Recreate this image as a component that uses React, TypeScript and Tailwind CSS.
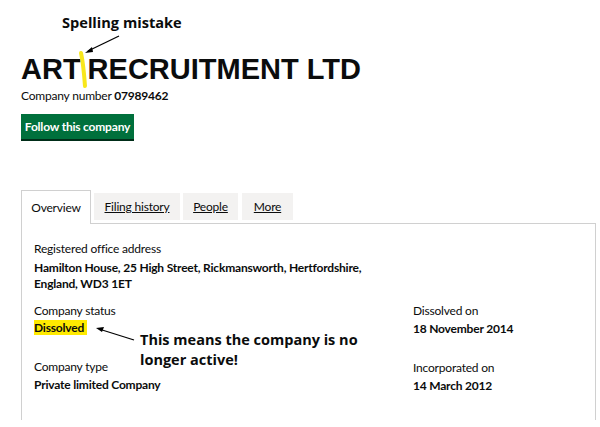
import React from 'react';

const body = { fontFamily: 'Lato, "Noto Sans", Arial, sans-serif' };
const note = { fontFamily: '"Open Sans", sans-serif' };

const Field: React.FC<{ label: string; children: React.ReactNode; className?: string }> = ({ label, children, className }) => (
  <div className={className}>
    <div className="text-[12px] leading-[16px] tracking-[-0.2px]">{label}</div>
    <div className="mt-[2px] text-[12px] leading-[16px] font-bold tracking-[-0.2px]">{children}</div>
  </div>
);

const tab = 'h-[27px] mb-[3px] bg-[#f3f2f1] text-[12px] tracking-[-0.2px] flex items-center justify-center underline';

const App: React.FC = () => {
  return (
    <div className="relative w-[600px] h-[427px] bg-white overflow-hidden text-[#0b0c0c]" style={body}>
      {/* annotation: spelling */}
      <div className="pl-[62px] pt-[12px] h-[52px] text-[14.6px] leading-[20px] font-bold" style={note}>
        Spelling mistake
      </div>
      <svg className="absolute left-0 top-0" width="600" height="427" viewBox="0 0 600 427">
        {/* arrow to title */}
        <line x1="119" y1="36" x2="88" y2="51" stroke="#000" strokeWidth="1.3" />
        <path d="M85 53 L92 47 L93 52 Z" fill="#000" />
        {/* highlighter mark */}
        <path d="M81 53 C83 62 84 72 85 86" stroke="#f8e71c" strokeWidth="4" strokeLinecap="round" fill="none" />
        {/* arrow to status */}
        <line x1="134" y1="340" x2="99" y2="329" stroke="#000" strokeWidth="1.3" />
        <path d="M96 328 L104 327 L102 332 Z" fill="#000" />
      </svg>

      <div className="px-[21px]">
        <h1 className="text-[29px] leading-[34px] font-bold" style={{ fontFamily: '"Liberation Sans", Arial, sans-serif' }}>
          ART<span className="inline-block w-[7px]" />RECRUITMENT LTD
        </h1>
        <div className="mt-[2px] text-[12px] leading-[16px] tracking-[-0.2px]">
          Company number <span className="font-bold">07989462</span>
        </div>
        <button className="mt-[10px] h-[25px] w-[113px] bg-[#00703c] text-white text-[12px] font-bold tracking-[-0.2px] shadow-[0_2px_0_#002d18]">
          Follow this company
        </button>

        {/* tabs */}
        <div className="mt-[50px] flex items-end">
          <div className="h-[34px] w-[70px] border border-b-0 border-[#d0d0d0] bg-white text-[12px] tracking-[-0.2px] flex items-center justify-center relative top-[1px]">
            Overview
          </div>
          <div className={`${tab} ml-[3px] w-[86px]`}>Filing history</div>
          <div className={`${tab} ml-[3px] w-[55px]`}>People</div>
          <div className={`${tab} ml-[4px] w-[51px]`}>More</div>
        </div>
        <div className="w-[575px] h-[197px] border border-b-0 border-[#d0d0d0] px-[12px] pt-[17px]">
          <div>
            <div className="text-[12px] leading-[16px] tracking-[-0.2px]">Registered office address</div>
            <div className="mt-[3px] text-[12px] leading-[16px] font-bold tracking-[-0.2px]">
              <div>Hamilton House, 25 High Street, Rickmansworth, Hertfordshire,</div>
              <div>England, WD3 1ET</div>
            </div>
          </div>
          <div className="mt-[11px] flex">
            <div className="w-[379px]">
              <div className="text-[12px] leading-[16px] tracking-[-0.2px]">Company status</div>
              <div className="mt-[1px] text-[12px] leading-[16px] font-bold tracking-[-0.2px]">
                <span className="bg-[#ffea00] pr-[3px]">Dissolved</span>
              </div>
              <div className="relative h-0">
                <div className="absolute left-[106px] -top-[6px] w-[235px] text-[14.5px] leading-[20px] font-bold" style={note}>
                  This means the company is no longer active!
                </div>
              </div>
              <Field label="Company type" className="mt-[23px]">Private limited Company</Field>
            </div>
            <div>
              <Field label="Dissolved on">18 November 2014</Field>
              <Field label="Incorporated on" className="mt-[23px]">14 March 2012</Field>
            </div>
          </div>
        </div>
      </div>
    </div>
  );
};

export default App;
